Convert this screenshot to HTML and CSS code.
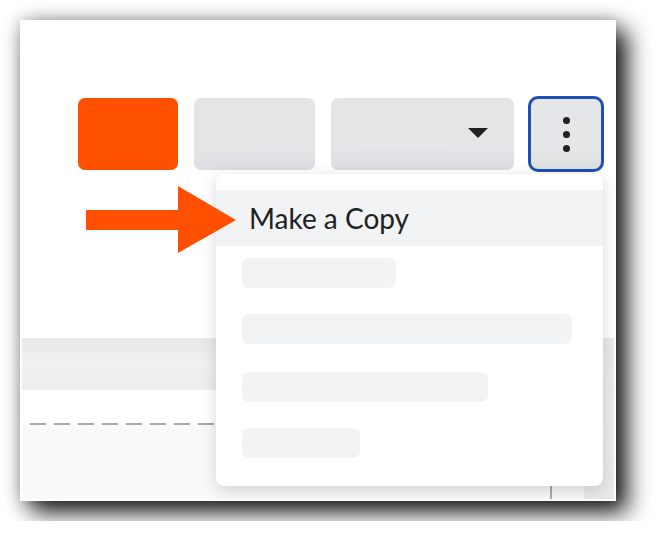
FILE: index.html
```
<!DOCTYPE html>
<html lang="en">
<head>
<meta charset="utf-8">
<title>Make a Copy</title>
<link rel="stylesheet" href="styles.css">
</head>
<body>
<div class="card">
  <div class="toolbar">
    <div class="btn btn-primary"><span class="btn-blob"></span></div>
    <div class="btn btn-secondary"></div>
    <div class="btn btn-dropdown"><span class="dd-blob"></span><span class="caret"></span></div>
    <div class="btn btn-kebab"><span class="dot"></span><span class="dot"></span><span class="dot"></span></div>
  </div>
  <div class="lower">
    <div class="main">
      <div class="band"></div>
      <div class="spacer"></div>
      <div class="table">
        <div class="table-col"></div>
      </div>
    </div>
    <div class="side"></div>
  </div>

  <div class="menu">
    <div class="menu-item active">Make a Copy</div>
    <div class="skeleton sk1"></div>
    <div class="skeleton sk2"></div>
    <div class="skeleton sk3"></div>
    <div class="skeleton sk4"></div>
  </div>

  <svg class="arrow" width="150" height="67" viewBox="0 0 150 67" aria-hidden="true">
    <rect x="0" y="24" width="93" height="20" fill="#fe5000"/>
    <polygon points="92,0 150,34 92,67" fill="#fe5000"/>
  </svg>
</div>
</body>
</html>
```

FILE: styles.css
```
html, body {
  margin: 0;
  padding: 0;
  background: #ffffff;
}

body {
  padding: 20px;
  font-family: Lato, "Noto Sans", sans-serif;
}

.card {
  position: relative;
  width: 596px;
  height: 481px;
  box-sizing: border-box;
  padding: 2px;
  background: #ffffff;
  display: flex;
  flex-direction: column;
  box-shadow: 11px 11px 22px 0 rgba(0, 0, 0, 0.9), 0 0 16px rgba(0, 0, 0, 0.28);
}

.toolbar {
  height: 316px;
  box-sizing: border-box;
  padding: 76px 12px 0 0;
  display: flex;
  justify-content: flex-end;
  align-items: flex-start;
  gap: 16px;
}

.btn {
  height: 72px;
  border-radius: 7px;
  box-sizing: border-box;
  position: relative;
}

.btn-primary {
  width: 100px;
  background: #fe5000;
  display: flex;
  align-items: center;
  justify-content: center;
}

.btn-blob {
  width: 68px;
  height: 40px;
  border-radius: 8px;
  background: #fe5202;
}

.btn-secondary {
  width: 121px;
  background: linear-gradient(#e4e5e7 0%, #e4e5e7 70%, #dcdde0 100%);
}

.btn-dropdown {
  width: 183px;
  background: linear-gradient(#e4e5e7 0%, #e4e5e7 70%, #dcdde0 100%);
  display: flex;
  align-items: center;
  padding: 0 26px 0 22px;
  justify-content: space-between;
}

.dd-blob {
  width: 96px;
  height: 24px;
  margin-top: 10px;
  border-radius: 6px;
  background: #e6e7e9;
}

.caret {
  width: 0;
  height: 0;
  border-left: 10px solid transparent;
  border-right: 10px solid transparent;
  border-top: 10px solid #202122;
  margin-top: -2px;
}

.btn-kebab {
  width: 72px;
  background: linear-gradient(#e5e6e8 0%, #e5e6e8 70%, #dedfe1 100%);
  outline: 3px solid #1c50b4;
  outline-offset: -1px;
  border-radius: 8px;
  display: flex;
  flex-direction: column;
  align-items: center;
  justify-content: center;
  gap: 7px;
}

.dot {
  width: 7px;
  height: 7px;
  border-radius: 50%;
  background: #202122;
}

.lower {
  flex: 1;
  display: flex;
}

.main {
  flex: 1;
  display: flex;
  flex-direction: column;
}

.band {
  height: 52px;
  background: linear-gradient(#e8e8e9 0%, #f0f0f1 45%, #ededee 100%);
}

.spacer {
  height: 33px;
}

.table {
  flex: 1;
  position: relative;
  background-color: #f9f9f9;
  background-image: repeating-linear-gradient(to right, #a3acb0 0, #a3acb0 16px, transparent 16px, transparent 24px);
  background-size: 100% 2px;
  background-repeat: no-repeat;
  background-position: 8px 0;
  display: flex;
  justify-content: flex-end;
  padding-right: 32px;
}

.table-col {
  width: 2px;
  background: #a3acb0;
}

.side {
  width: 30px;
  background: linear-gradient(#e9eaeb 0%, #eceded 60%, #e8e9ea 100%);
}

.menu {
  position: absolute;
  left: 196px;
  top: 154px;
  width: 387px;
  height: 312px;
  box-sizing: border-box;
  background: #ffffff;
  border-radius: 8px;
  box-shadow: 0 4px 16px rgba(0, 0, 0, 0.16);
  padding: 16px 0 28px;
  display: flex;
  flex-direction: column;
}

.menu-item {
  height: 56px;
  box-sizing: border-box;
  padding-left: 33px;
  display: flex;
  align-items: center;
  font-size: 28px;
  color: #202122;
  letter-spacing: 0;
}

.menu-item.active {
  background: #f2f3f5;
}

.skeleton {
  height: 30px;
  margin-left: 26px;
  border-radius: 7px;
  background: #f2f3f5;
}

.sk1 { width: 154px; margin-top: 12px; }
.sk2 { width: 330px; margin-top: 26px; }
.sk3 { width: 246px; margin-top: 28px; }
.sk4 { width: 118px; margin-top: 26px; }

.arrow {
  position: absolute;
  left: 66px;
  top: 166px;
  display: block;
}
```
